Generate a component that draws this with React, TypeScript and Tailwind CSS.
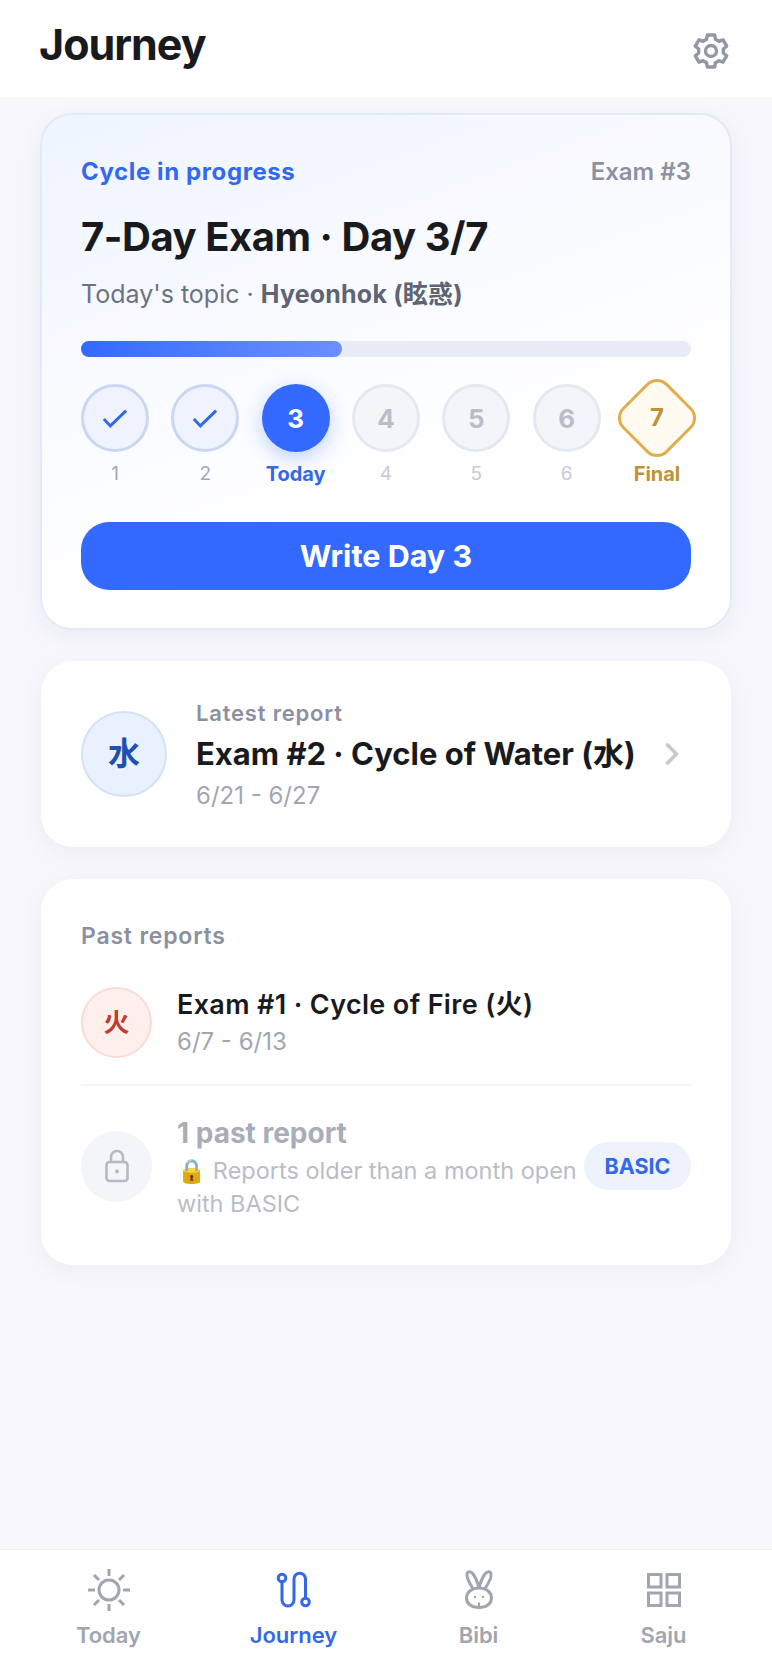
import { ChevronRight } from "lucide-react";

const font = { fontFamily: '"Inter", "Noto Sans CJK KR", "Noto Color Emoji", sans-serif' };

// six blocky teeth, top tooth pointing straight up
function gearPath() {
  const pt = (r: number, deg: number) => {
    const a = (deg * Math.PI) / 180;
    return `${(21 + r * Math.cos(a)).toFixed(2)} ${(21 + r * Math.sin(a)).toFixed(2)}`;
  };
  let d = "";
  for (let i = 0; i < 6; i++) {
    const a = -90 + i * 60;
    d += `${i === 0 ? "M" : "L"}${pt(12.5, a - 21)} L${pt(16.4, a - 13)} L${pt(16.4, a + 13)} L${pt(12.5, a + 21)} `;
  }
  return d + "Z";
}

function Gear() {
  return (
    <svg width="42" height="42" viewBox="0 0 42 42" fill="none" stroke="#9297a4" strokeWidth="3.4" strokeLinejoin="round" className="mt-[30px]">
      <path d={gearPath()} />
      <circle cx="21" cy="21" r="5.500" />
    </svg>
  );
}

function Check() {
  return (
    <svg width="26" height="26" viewBox="0 0 28 28" fill="none" stroke="#3369e8" strokeWidth="3.2">
      <polyline points="2,15 9,22.5 26,6" />
    </svg>
  );
}

function Steps() {
  const labelBase = "mt-[10px] text-center leading-[24px]";
  return (
    <div className="mt-[27px] flex justify-between">
      {["1", "2"].map((n) => (
        <div key={n} className="w-[68px]">
          <div className="flex h-[68px] w-[68px] items-center justify-center rounded-full border-[3px] border-[#c9d7f3] bg-[#eff3fd]">
            <Check />
          </div>
          <div className={`${labelBase} text-[19px] text-[#a3a7b2]`}>{n}</div>
        </div>
      ))}

      <div className="w-[68px]">
        <div className="flex h-[68px] w-[68px] items-center justify-center rounded-full bg-[#3369ff] text-[26px] font-bold text-white shadow-[0_6px_20px_rgba(51,105,255,0.3)]">
          3
        </div>
        <div className={`${labelBase} -mx-4 text-[20px] font-bold text-[#3369e8]`}>Today</div>
      </div>

      {["4", "5", "6"].map((n) => (
        <div key={n} className="w-[68px]">
          <div className="flex h-[68px] w-[68px] items-center justify-center rounded-full border-[3px] border-[#e5e8f0] bg-[#f3f5f9] text-[26px] font-bold text-[#b9bdc8]">
            {n}
          </div>
          <div className={`${labelBase} text-[19px] text-[#c9ccd5]`}>{n}</div>
        </div>
      ))}

      <div className="w-[68px]">
        <div className="relative flex h-[68px] w-[68px] items-center justify-center">
          <div className="absolute left-[2px] top-[2px] h-[64px] w-[64px] rotate-45 rounded-[15px] border-[3px] border-[#e1ad4e] bg-[#fffbf0]" />
          <span className="relative text-[24px] font-bold text-[#bf9138]">7</span>
        </div>
        <div className={`${labelBase} text-[20px] font-bold text-[#bf9138]`}>Final</div>
      </div>
    </div>
  );
}

function CurrentCycle() {
  return (
    <section className="rounded-[32px] border-2 border-[#e2eaf8] bg-[linear-gradient(160deg,#eef4ff_0%,#f8faff_35%,#ffffff_70%)] px-[39px] pb-[38px] pt-[42px] shadow-[0_6px_24px_rgba(40,60,120,0.06)]">
      <div className="flex items-center justify-between text-[24px] leading-[30px]">
        <span className="font-bold tracking-[0.6px] text-[#3369f0]">Cycle in progress</span>
        <span className="font-semibold text-[#8d919e]">Exam #3</span>
      </div>
      <h2 className="mt-[26px] text-[40px] font-bold leading-[48px] tracking-[-0.45px] text-[#191a1e]">
        7-Day Exam · Day 3/7
      </h2>
      <p className="mt-[17px] text-[25px] leading-[32px] text-[#6d7280]">
        Today's topic · <span className="font-bold tracking-[0.2px] text-[#5f6473]">Hyeonhok (眩惑)</span>
      </p>
      <div className="mt-[31px] h-4 rounded-full bg-[#e8ecf7]">
        <div className="h-4 w-[42.8%] rounded-full bg-gradient-to-r from-[#3369ff] to-[#6c8fff]" />
      </div>
      <Steps />
      <button className="mt-9 h-[68px] w-full rounded-[28px] bg-[#3369ff] text-[30.5px] font-bold text-white">
        Write Day 3
      </button>
    </section>
  );
}

function LatestReport() {
  return (
    <section className="mx-px mt-[31px] flex items-center rounded-[32px] bg-white pb-9 pl-10 pr-[41px] pt-[39px] shadow-[0_6px_24px_rgba(40,60,120,0.05)]">
      <div className="mb-1 flex h-[86px] w-[86px] shrink-0 items-center justify-center rounded-full border-2 border-[#d4e2f8] bg-[#e9f1fd] text-[32px] font-bold text-[#1f4fb0]">
        水
      </div>
      <div className="ml-[29px] min-w-0 flex-1">
        <div className="text-[22px] font-semibold leading-[26px] tracking-[0.8px] text-[#8b90a0]">Latest report</div>
        <div className="mt-2 whitespace-nowrap text-[31px] font-bold leading-10 text-[#191a1e]">
          Exam #2 · Cycle of Water (水)
        </div>
        <div className="mt-[7px] text-[24px] leading-[30px] text-[#a2a6b1]">6/21 - 6/27</div>
      </div>
      <ChevronRight size={36} strokeWidth={2.4} className="mb-1 shrink-0 text-[#c6c9d2]" />
    </section>
  );
}

function PastReports() {
  return (
    <section className="mx-px mt-8 rounded-[32px] bg-white px-10 pb-[45px] pt-[43px] shadow-[0_6px_24px_rgba(40,60,120,0.05)]">
      <div className="text-[23px] font-semibold leading-7 tracking-[0.8px] text-[#8b90a0]">Past reports</div>

      <div className="mt-[37px] flex items-center">
        <div className="flex h-[71px] w-[71px] shrink-0 items-center justify-center rounded-full border-2 border-[#f8ddd6] bg-[#fdf0ec] text-[26px] font-bold text-[#c23a2b]">
          火
        </div>
        <div className="ml-[25px]">
          <div className="text-[27px] font-semibold leading-[34px] tracking-[0.35px] text-[#191a1e]">Exam #1 · Cycle of Fire (火)</div>
          <div className="mt-[5px] text-[24px] leading-[30px] text-[#a2a6b1]">6/7 - 6/13</div>
        </div>
      </div>

      <div className="mt-[26px] h-[2px] bg-[#f4f5f8]" />

      <div className="mt-[30px] flex items-center">
        <div className="mb-1 flex h-[71px] w-[71px] shrink-0 items-center justify-center rounded-full bg-[#f3f5f9]">
          <svg width="30" height="34" viewBox="0 0 30 34" fill="none" stroke="#b5b9c4" strokeWidth="2.6">
            <rect x="4.5" y="13" width="21" height="19" rx="3" />
            <path d="M9 13V8a6 6 0 0 1 12 0v5" />
            <circle cx="15" cy="22.5" r="2" fill="#b5b9c4" stroke="none" />
          </svg>
        </div>
        <div className="ml-[25px] min-w-0 flex-1">
          <div className="text-[28px] font-bold leading-[34px] text-[#a9adb9]">1 past report</div>
          <div className="mt-1 text-[23.5px] leading-[33px] text-[#b9bdc7]">🔒 Reports older than a month open with BASIC</div>
        </div>
        <div className="mb-1 flex h-12 w-[107px] shrink-0 items-center justify-center rounded-full bg-[#eef2fd] text-[21.5px] font-bold text-[#3369e8]">
          BASIC
        </div>
      </div>
    </section>
  );
}

function SunIcon() {
  return (
    <svg width="42" height="42" viewBox="0 0 42 42" fill="none" stroke="#a1a5b0" strokeWidth="3">
      <circle cx="21" cy="21" r="10" />
      <path d="M21 0v7M21 35v7M0 21h7M35 21h7M6 6l5 5M31 31l5 5M36 6l-5 5M11 31l-5 5" />
    </svg>
  );
}

function RouteIcon() {
  return (
    <svg width="42" height="42" viewBox="0 0 42 42" fill="none" stroke="#3369e8" strokeWidth="3">
      <circle cx="9" cy="9" r="3.8" />
      <circle cx="32.5" cy="33" r="3.8" />
      <path d="M9 12.8V31a6 6 0 0 0 12 0V10a5.75 5.75 0 0 1 11.5 0v19.2" />
    </svg>
  );
}

function BunnyIcon() {
  return (
    <svg width="42" height="42" viewBox="0 0 42 42" fill="none" stroke="#a1a5b0" strokeWidth="3">
      <path d="M15.5 20.5C12 15 8 9 9 5c.8-3 3.8-2.8 6 0 3 4 5 10 6 14 1-4 3-10 6-14 2.2-2.8 5.2-3 6 0 1 4-3 10-6.500 15.500" />
      <path d="M21 38.500c-7 0-12.500-3.500-12.500-9.500S14 19 21 19s12.500 4 12.500 10-5.500 9.500-12.500 9.500Z" />
      <circle cx="17" cy="28" r="1.200" fill="#a1a5b0" stroke="none" />
      <circle cx="25" cy="28" r="1.200" fill="#a1a5b0" stroke="none" />
      <path d="M21 38v-4.500" strokeWidth="2" />
    </svg>
  );
}

function GridIcon() {
  return (
    <svg width="42" height="42" viewBox="0 0 42 42" fill="none" stroke="#a1a5b0" strokeWidth="3">
      <rect x="5.500" y="5.500" width="12.500" height="12.500" />
      <rect x="24" y="5.500" width="12.500" height="12.500" />
      <rect x="5.500" y="24" width="12.500" height="12.500" />
      <rect x="24" y="24" width="12.500" height="12.500" />
    </svg>
  );
}

function TabBar() {
  const tabs = [
    { label: "Today", icon: <SunIcon /> },
    { label: "Journey", icon: <RouteIcon />, active: true },
    { label: "Bibi", icon: <BunnyIcon /> },
    { label: "Saju", icon: <GridIcon /> },
  ];
  return (
    <nav className="grid h-[122px] grid-cols-4 border-t border-[#f0f1f5] bg-white px-4 pt-[19px]">
      {tabs.map((tab) => (
        <div key={tab.label} className="flex flex-col items-center">
          {tab.icon}
          <span className={`mt-[11px] text-[22px] font-semibold leading-[26px] ${tab.active ? "text-[#3369e8]" : "text-[#a1a5b0]"}`}>
            {tab.label}
          </span>
        </div>
      ))}
    </nav>
  );
}

export default function App() {
  return (
    <div style={font} className="flex h-[1671px] flex-col bg-[#f7f7fc]">
      <header className="flex h-[97px] shrink-0 items-start justify-between bg-white pl-[39px] pr-10">
        <h1 className="mt-[19px] text-[43px] font-bold leading-[50px] tracking-[-1px] text-[#191a1e]">Journey</h1>
        <Gear />
      </header>
      <main className="flex-1 px-10 pt-4">
        <CurrentCycle />
        <LatestReport />
        <PastReports />
      </main>
      <TabBar />
    </div>
  );
}
